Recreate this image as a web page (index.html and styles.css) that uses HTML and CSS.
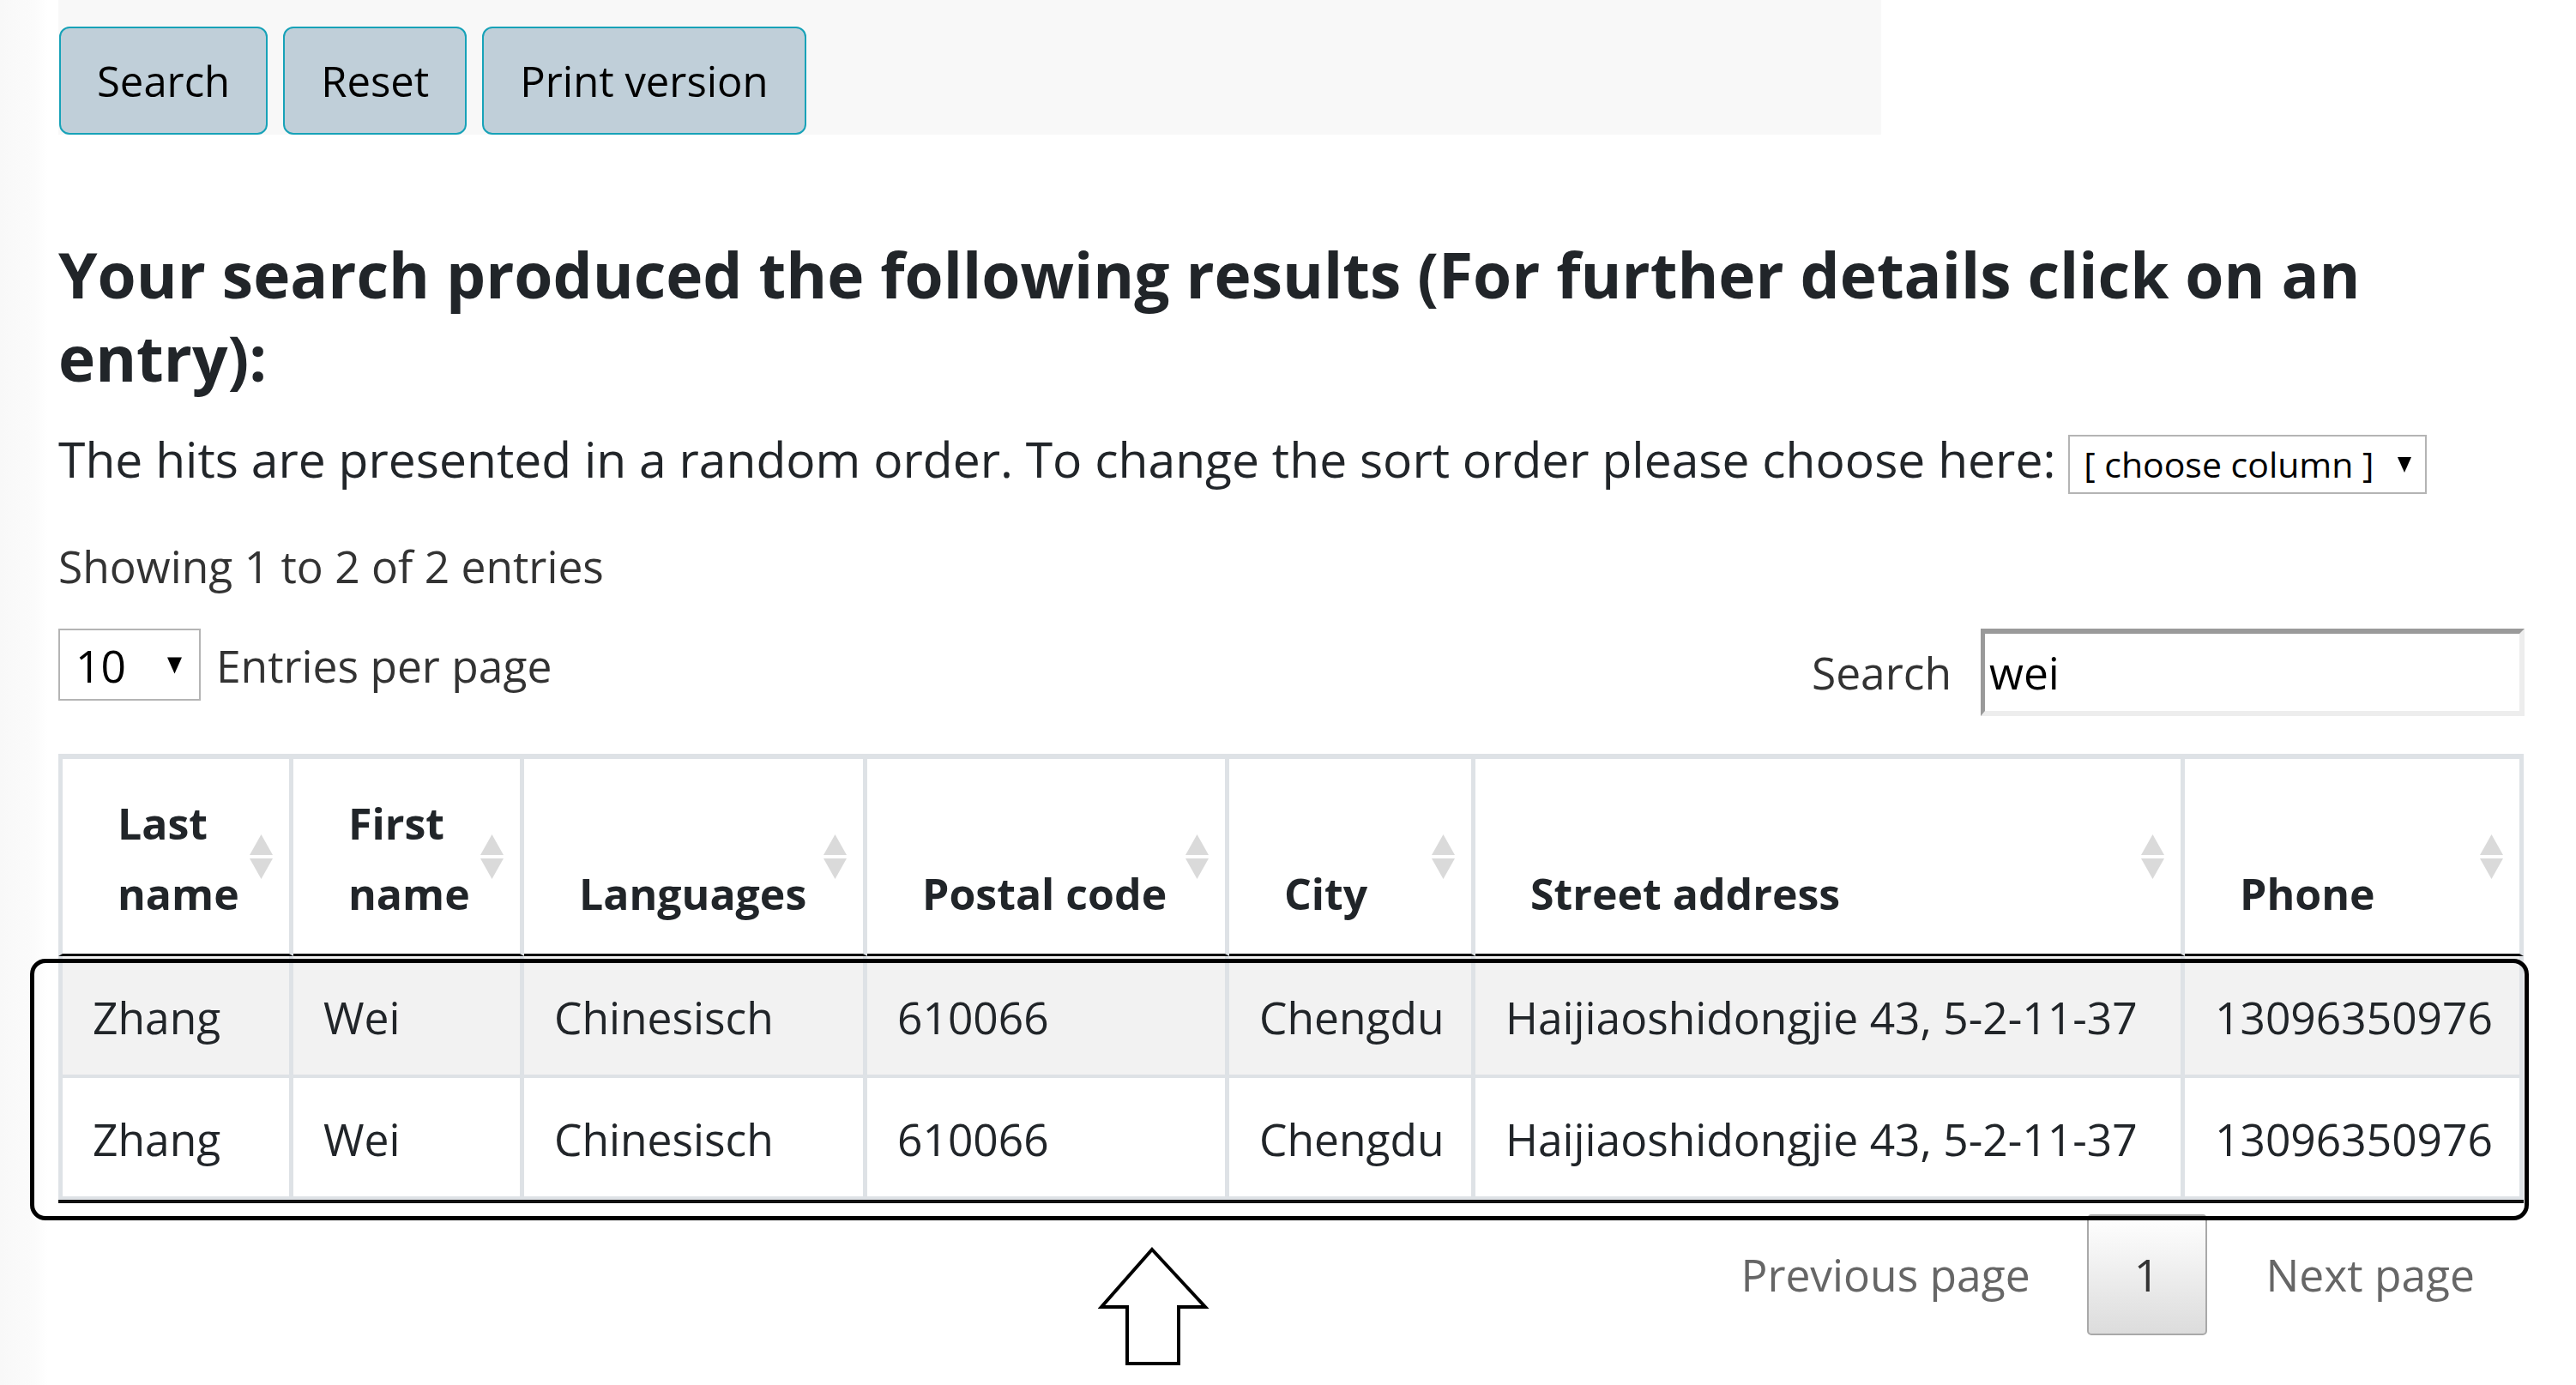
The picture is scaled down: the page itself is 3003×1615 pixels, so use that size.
FILE: index.html
```html
<!DOCTYPE html>
<html lang="en">
<head>
<meta charset="utf-8">
<title>Search results</title>
<link rel="stylesheet" href="styles.css">
</head>
<body>
<div class="page">
  <div class="toolbar">
    <button class="btn">Search</button>
    <button class="btn">Reset</button>
    <button class="btn">Print version</button>
  </div>

  <h4 class="title">Your search produced the following results (For further details click on an entry):</h4>

  <p class="sortline">The hits are presented in a random order. To change the sort order please choose here: <span class="colselect"><span>[ choose column ]</span><svg class="caret" viewBox="0 0 16 18"><polygon points="0,0 16,0 8,18"/></svg></span></p>

  <div class="info">Showing 1 to 2 of 2 entries</div>

  <div class="controls">
    <div class="length">
      <span class="lensel"><span>10</span><svg class="caret small" viewBox="0 0 16 18"><polygon points="0,0 16,0 8,18"/></svg></span>
      <span class="lenlabel">Entries per page</span>
    </div>
    <div class="filter">
      <span class="filterlabel">Search</span>
      <span class="searchbox">wei</span>
    </div>
  </div>

  <table class="results">
    <colgroup>
      <col class="c1"><col class="c2"><col class="c3"><col class="c4"><col class="c5"><col class="c6"><col class="c7">
    </colgroup>
    <thead>
      <tr>
        <th>Last name<svg class="sort" viewBox="0 0 27 52"><polygon points="13.5,0 27,24 0,24"/><polygon points="0,28 27,28 13.5,52"/></svg></th>
        <th>First name<svg class="sort" viewBox="0 0 27 52"><polygon points="13.5,0 27,24 0,24"/><polygon points="0,28 27,28 13.5,52"/></svg></th>
        <th>Languages<svg class="sort" viewBox="0 0 27 52"><polygon points="13.5,0 27,24 0,24"/><polygon points="0,28 27,28 13.5,52"/></svg></th>
        <th>Postal code<svg class="sort" viewBox="0 0 27 52"><polygon points="13.5,0 27,24 0,24"/><polygon points="0,28 27,28 13.5,52"/></svg></th>
        <th>City<svg class="sort" viewBox="0 0 27 52"><polygon points="13.5,0 27,24 0,24"/><polygon points="0,28 27,28 13.5,52"/></svg></th>
        <th>Street address<svg class="sort" viewBox="0 0 27 52"><polygon points="13.5,0 27,24 0,24"/><polygon points="0,28 27,28 13.5,52"/></svg></th>
        <th>Phone<svg class="sort" viewBox="0 0 27 52"><polygon points="13.5,0 27,24 0,24"/><polygon points="0,28 27,28 13.5,52"/></svg></th>
      </tr>
    </thead>
    <tbody>
      <tr class="odd">
        <td>Zhang</td><td>Wei</td><td>Chinesisch</td><td>610066</td><td>Chengdu</td><td>Haijiaoshidongjie 43, 5-2-11-37</td><td>13096350976</td>
      </tr>
      <tr class="even">
        <td>Zhang</td><td>Wei</td><td>Chinesisch</td><td>610066</td><td>Chengdu</td><td>Haijiaoshidongjie 43, 5-2-11-37</td><td>13096350976</td>
      </tr>
    </tbody>
  </table>

  <div class="pager">
    <span class="pg">Previous page</span>
    <span class="pg-cur">1</span>
    <span class="pg">Next page</span>
  </div>

  <div class="highlight"></div>
  <svg class="arrow" viewBox="0 0 130 142"><polygon points="63,5 125,72 94,72 94,138 34,138 34,72 4,72"/></svg>
</div>
</body>
</html>
```

FILE: styles.css
```css
html, body {
  margin: 0;
  padding: 0;
}
body {
  background: linear-gradient(to right, #f8f8f8 0, #fbfbfb 40px, #ffffff 56px);
  font-family: "Open Sans", "Noto Sans", sans-serif;
  color: #212529;
  min-height: 1615px;
}
.page {
  position: relative;
  padding: 0 60px 0 68px;
}
.toolbar {
  width: 2125px;
  background: #f8f8f8;
  padding-top: 31px;
  display: flex;
  gap: 18px;
  padding-left: 1px;
  box-sizing: border-box;
}
.btn {
  font-family: "Open Sans", "Noto Sans", sans-serif;
  font-size: 49px;
  line-height: 74px;
  padding: 24px 42px;
  border: 2px solid #17a2b8;
  border-radius: 12px;
  background: #c0cfd9;
  color: #000;
  margin: 0;
}
.title {
  font-size: 73px;
  line-height: 97px;
  font-weight: 700;
  margin: 114px 0 27px 0;
  color: #212529;
}
.sortline {
  font-size: 57px;
  line-height: 86px;
  margin: 0 0 42px 0;
  color: #212529;
}
.colselect {
  display: inline-flex;
  align-items: center;
  justify-content: space-between;
  box-sizing: border-box;
  width: 418px;
  height: 69px;
  border: 2px solid #b4b4b4;
  padding: 0 16px 0 16px;
  font-size: 41px;
  line-height: 65px;
  color: #000;
  background: #fff;
  vertical-align: baseline;
}
.caret {
  width: 16px;
  height: 18px;
  fill: #000;
  flex: none;
}
.caret.small {
  width: 17px;
  height: 20px;
}
.info {
  font-size: 51.5px;
  line-height: 81px;
  color: #333;
  margin-bottom: 32px;
}
.controls {
  display: flex;
  justify-content: space-between;
  align-items: flex-start;
  margin-bottom: 44px;
}
.length {
  display: flex;
  align-items: baseline;
  gap: 18px;
}
.lensel {
  display: flex;
  align-items: center;
  justify-content: space-between;
  box-sizing: border-box;
  width: 166px;
  height: 84px;
  border: 2px solid #b4b4b4;
  padding: 2px 20px 0 18px;
  font-size: 51.5px;
  line-height: 80px;
  color: #000;
  background: #fff;
}
.lenlabel {
  font-size: 51.5px;
  line-height: 81px;
  color: #333;
}
.filter {
  display: flex;
  align-items: baseline;
  gap: 34px;
}
.filterlabel {
  font-size: 51.5px;
  line-height: 81px;
  color: #333;
}
.searchbox {
  display: block;
  box-sizing: border-box;
  width: 634px;
  height: 102px;
  border-style: solid;
  border-width: 6px 6px 6px 5px;
  border-color: #9a9a9a #ededed #ededed #9a9a9a;
  padding: 0 5px;
  font-size: 51.5px;
  line-height: 90px;
  color: #000;
  background: #fff;
}
.results {
  table-layout: fixed;
  width: 2874px;
  border-collapse: separate;
  border-spacing: 0;
  border-bottom: 4px solid #111;
}
.c1 { width: 274px; }
.c2 { width: 269px; }
.c3 { width: 400px; }
.c4 { width: 422px; }
.c5 { width: 287px; }
.c6 { width: 827px; }
.c7 { width: 395px; }
.results th {
  position: relative;
  font-size: 50px;
  line-height: 82px;
  font-weight: 700;
  text-align: left;
  vertical-align: bottom;
  padding: 34px 45px 29px 64px;
  border-top: 6px solid #dee2e6;
  border-right: 5px solid #dee2e6;
  border-bottom: 3px solid #111;
  color: #212529;
}
.results th:first-child,
.results td:first-child {
  border-left: 5px solid #dee2e6;
}
.sort {
  position: absolute;
  right: 19px;
  top: 50%;
  width: 27px;
  height: 52px;
  margin-top: -26px;
  fill: #dadada;
}
.results td {
  font-size: 51.5px;
  line-height: 81px;
  padding: 31px 16px 26px 35px;
  border-right: 5px solid #dee2e6;
  border-bottom: 4px solid #dee2e6;
  white-space: nowrap;
  color: #212529;
}
.results tr.odd td {
  background: #f2f2f2;
}
.results tr.even td {
  background: #fff;
}
.pager {
  display: flex;
  justify-content: flex-end;
  align-items: center;
  margin-top: 13px;
  padding-right: 25px;
}
.pg {
  font-size: 51.5px;
  line-height: 81px;
  padding: 0 33px;
  color: #666;
}
.pg-cur {
  display: flex;
  align-items: center;
  justify-content: center;
  box-sizing: border-box;
  width: 140px;
  height: 141px;
  margin: 0 36px 0 33px;
  border: 2px solid #a9a9a9;
  border-radius: 5px;
  background: linear-gradient(to bottom, #ffffff 0%, #dcdcdc 100%);
  font-size: 51.5px;
  line-height: 81px;
  color: #333;
}
.highlight {
  position: absolute;
  left: 35px;
  top: 1118px;
  width: 2913px;
  height: 305px;
  box-sizing: border-box;
  border: 5px solid #000;
  border-radius: 18px;
  pointer-events: none;
}
.arrow {
  position: absolute;
  left: 1280px;
  top: 1452px;
  width: 130px;
  height: 142px;
  fill: #fff;
  stroke: #000;
  stroke-width: 4;
  stroke-linejoin: miter;
}
```
